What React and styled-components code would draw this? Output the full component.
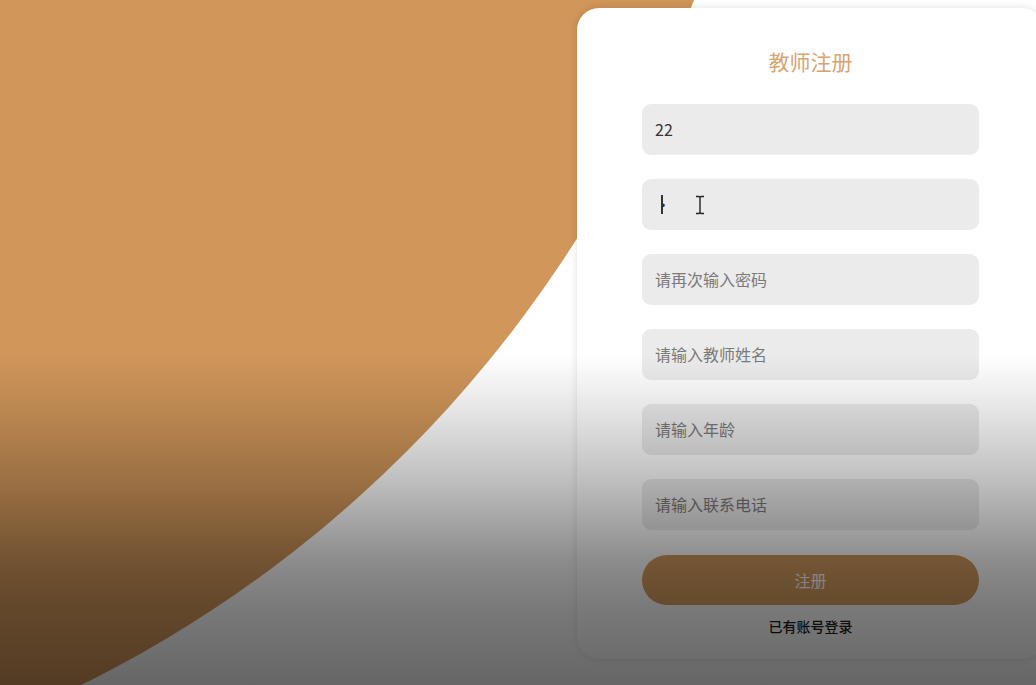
import React from "react";
import styled, { createGlobalStyle } from "styled-components";

const GlobalStyle = createGlobalStyle`
  html, body {
    margin: 0;
    padding: 0;
    height: 100%;
    overflow: hidden;
    background: #ffffff;
    font-family: "Noto Sans CJK SC", "Noto Sans", sans-serif;
  }
  #root {
    height: 100%;
  }
`;

const fields = [
  { placeholder: "请输入账号", value: "22", type: "text" },
  { placeholder: "请输入密码", value: "•", type: "text", caret: true },
  { placeholder: "请再次输入密码", type: "password" },
  { placeholder: "请输入教师姓名", type: "text" },
  { placeholder: "请输入年龄", type: "text" },
  { placeholder: "请输入联系电话", type: "text" },
];

export default function App() {
  return (
    <>
      <GlobalStyle />
      <Page>
        <Circle />
        <Card>
          <Title>教师注册</Title>
          <Form onSubmit={(e) => e.preventDefault()}>
            {fields.map((f) => (
              <Field key={f.placeholder}>
                <Input
                  type={f.type}
                  placeholder={f.placeholder}
                  defaultValue={f.value}
                  $dot={f.caret}
                />
                {f.caret && (
                  <>
                    <Caret />
                    <Pointer width="10" height="20" viewBox="0 0 10 20">
                      <path
                        d="M1 1.5h3l1 1 1-1h3M5 2.5v15M1 18.5h3l1-1 1 1h3"
                        fill="none"
                        stroke="#222"
                        strokeWidth="1.4"
                      />
                    </Pointer>
                  </>
                )}
              </Field>
            ))}
            <Submit type="submit">注册</Submit>
            <LoginLink>已有账号登录</LoginLink>
          </Form>
        </Card>
        <Shade />
      </Page>
    </>
  );
}

const Page = styled.div`
  position: relative;
  height: 100%;
  display: flex;
  justify-content: flex-end;
  align-items: flex-start;
  padding-top: 8px;
  box-sizing: border-box;
  overflow: hidden;
`;

const Circle = styled.div`
  position: absolute;
  left: -1700px;
  top: -1655px;
  width: 2468px;
  height: 2468px;
  border-radius: 50%;
  background: #d0965a;
`;

const Card = styled.div`
  position: relative;
  width: 467px;
  height: 651px;
  margin-right: -8px;
  box-sizing: border-box;
  padding: 38px 65px 0;
  background: #ffffff;
  border-radius: 22px;
  box-shadow: 0 0 8px rgba(0, 0, 0, 0.12);
  display: flex;
  flex-direction: column;
  align-items: center;
`;

const Title = styled.h2`
  margin: 0 0 28px;
  font-size: 21px;
  line-height: 30px;
  font-weight: 400;
  color: #d8a470;
`;

const Form = styled.form`
  width: 337px;
  display: flex;
  flex-direction: column;
  align-items: center;
`;

const Field = styled.div`
  position: relative;
  width: 100%;
  margin-bottom: 24px;
`;

const Input = styled.input`
  display: block;
  width: 100%;
  height: 51px;
  box-sizing: border-box;
  padding: 0 13px 2px;
  border: 0;
  outline: 0;
  border-radius: 9px;
  background: #ebebeb;
  font-family: "Noto Sans CJK SC", "Noto Sans", sans-serif;
  font-size: 16px;
  color: #333;

  &::placeholder {
    color: #7a7a7a;
  }
`;

const Caret = styled.span`
  position: absolute;
  left: 19px;
  top: 16px;
  width: 1.5px;
  height: 19px;
  background: #333;
`;

const Pointer = styled.svg`
  position: absolute;
  left: 53px;
  top: 16px;
`;

const Submit = styled.button`
  width: 100%;
  height: 50px;
  margin-top: 1px;
  border: 0;
  border-radius: 25px;
  background: #d39b5e;
  color: #ffffff;
  font-family: "Noto Sans CJK SC", "Noto Sans", sans-serif;
  font-size: 16px;
  cursor: pointer;
`;

const LoginLink = styled.a`
  margin-top: 11px;
  font-size: 14px;
  line-height: 20px;
  font-weight: 500;
  color: #1c1c1c;
  cursor: pointer;
`;

const Shade = styled.div`
  position: absolute;
  left: 0;
  right: 0;
  top: 355px;
  bottom: 0;
  pointer-events: none;
  background: linear-gradient(
    to bottom,
    rgba(0, 0, 0, 0) 0px,
    rgba(0, 0, 0, 0.1) 55px,
    rgba(0, 0, 0, 0.25) 125px,
    rgba(0, 0, 0, 0.45) 205px,
    rgba(0, 0, 0, 0.52) 250px,
    rgba(0, 0, 0, 0.6) 330px
  );
`;
